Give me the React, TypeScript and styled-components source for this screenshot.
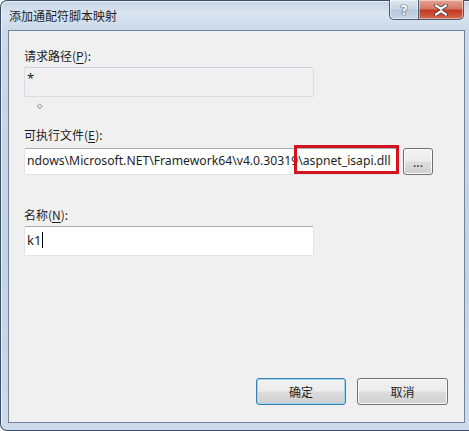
import React from "react";
import styled, { createGlobalStyle } from "styled-components";

const Global = createGlobalStyle`
  html, body { margin: 0; padding: 0; background: #ffffff; }
  body { width: 469px; height: 431px; overflow: hidden; font-family: "Noto Sans", "Noto Sans CJK SC", sans-serif; }
`;

const Window = styled.div`
  box-sizing: border-box;
  width: 469px;
  height: 431px;
  display: flex;
  flex-direction: column;
  border: 1px solid #3d4f66;
  border-right: none;
  border-radius: 7px 0 0 7px;
  background: linear-gradient(180deg, #c4d4e6 0px, #d9e4f0 12px, #cbd9e8 30px, #c2d3e6 60%, #cddbea 100%);
  box-shadow: inset 1px 1px 0 #eaf1f8;
`;

const TitleBar = styled.div`
  height: 29px;
  display: flex;
  align-items: flex-start;
  justify-content: space-between;
  flex-shrink: 0;
`;

const Title = styled.div`
  padding: 6px 0 0 8px;
  font-family: "Noto Sans CJK SC", sans-serif;
  font-size: 12px;
  line-height: 18px;
  color: #1e1e1e;
`;

const Caption = styled.div`
  display: flex;
  margin-right: 5px;
  margin-top: -1px;
`;

const CapBtn = styled.div<{ $close?: boolean }>`
  box-sizing: border-box;
  width: ${(p) => (p.$close ? 46 : 29)}px;
  height: 20px;
  display: flex;
  align-items: center;
  justify-content: center;
  border: 1px solid #4d5b6e;
  border-top: none;
  ${(p) =>
    p.$close
      ? `border-radius: 0 0 5px 0;
         background: linear-gradient(180deg, #e8a493 0%, #d47866 45%, #c23b22 55%, #d3674e 100%);`
      : `border-radius: 0 0 0 5px; border-right: none;
         background: linear-gradient(180deg, #dfe7f0 0%, #cbd7e5 45%, #b7c7da 55%, #c9d6e5 100%);`}
  box-shadow: inset 0 0 0 1px rgba(255,255,255,0.45);
`;

const HelpGlyph = styled.span`
  font-family: "DejaVu Sans", sans-serif;
  font-weight: bold;
  font-size: 14px;
  line-height: 14px;
  color: #ffffff;
  text-shadow: 0 0 1px #3a4a5e, 0 0 1px #3a4a5e, 0 0 1px #3a4a5e;
`;

const Client = styled.div`
  flex: 1;
  margin: 0 4px 7px 7px;
  box-sizing: border-box;
  border: 1px solid #72849a;
  background: #f0f0f0;
  padding: 17px 0 0 15px;
  display: flex;
  flex-direction: column;
  position: relative;
`;

const Label = styled.div`
  font-family: "Noto Sans CJK SC", sans-serif;
  font-size: 12px;
  line-height: 16px;
  color: #1e1e1e;
  u { text-decoration: underline; text-underline-offset: 2px; }
`;

const Gap = styled.div<{ $h: number }>`
  height: ${(p) => p.$h}px;
  flex-shrink: 0;
`;

const FieldBox = styled.div<{ $disabled?: boolean; $w: number; $h: number }>`
  box-sizing: border-box;
  width: ${(p) => p.$w}px;
  height: ${(p) => p.$h}px;
  flex-shrink: 0;
  border: 1px solid ${(p) => (p.$disabled ? "#d9dde2" : "#e2e3ea")};
  border-top-color: ${(p) => (p.$disabled ? "#cfd3d8" : "#abadb3")};
  background: ${(p) => (p.$disabled ? "#f0f0f0" : "#ffffff")};
  border-radius: 2px;
  overflow: hidden;
  font-family: "Noto Sans", "Noto Sans CJK SC", sans-serif;
  font-size: 13px;
  color: #1e1e1e;
  display: flex;
`;

const FieldText = styled.div<{ $pt: number; $size?: number }>`
  padding: ${(p) => p.$pt}px 0 0 2px;
  line-height: 16px;
  height: 16px;
  white-space: nowrap;
  display: flex;
  align-items: center;
  ${(p) => (p.$size ? `font-size: ${p.$size}px;` : "")}
`;

const Caret = styled.span`
  display: inline-block;
  width: 1px;
  height: 16px;
  background: #000;
  margin-left: 1px;
`;

const Dot = styled.div`
  font-family: "DejaVu Sans", sans-serif;
  font-size: 7px;
  line-height: 8px;
  color: #333;
  margin: 5px 0 0 13px;
`;

const Row = styled.div`
  display: flex;
  align-items: flex-start;
  gap: 4px;
  position: relative;
`;

const Highlight = styled.div`
  position: absolute;
  left: 270px;
  top: -3px;
  width: 105px;
  height: 29px;
  box-sizing: border-box;
  border: 3px solid #d3131d;
`;

const Button = styled.div<{ $w: number; $h: number; $def?: boolean }>`
  box-sizing: border-box;
  width: ${(p) => p.$w}px;
  height: ${(p) => p.$h}px;
  flex-shrink: 0;
  border: 1px solid ${(p) => (p.$def ? "#3c7fb1" : "#707070")};
  border-radius: 3px;
  background: linear-gradient(180deg, #f2f2f2 0%, #ebebeb 48%, #dddddd 52%, #cfcfcf 100%);
  box-shadow: inset 0 0 0 1px ${(p) => (p.$def ? "#9ad6f0" : "#fbfbfb")};
  display: flex;
  align-items: center;
  justify-content: center;
  font-family: "Noto Sans CJK SC", sans-serif;
  font-size: 12px;
  color: #1e1e1e;
  padding-bottom: 1px;
`;

const Footer = styled.div`
  margin-top: auto;
  margin-bottom: 17px;
  margin-right: 16px;
  display: flex;
  justify-content: flex-end;
  gap: 11px;
`;

export default function App() {
  return (
    <>
      <Global />
      <Window>
        <TitleBar>
          <Title>添加通配符脚本映射</Title>
          <Caption>
            <CapBtn>
              <HelpGlyph>?</HelpGlyph>
            </CapBtn>
            <CapBtn $close>
              <svg width="16" height="12" viewBox="0 0 16 12">
                <path
                  d="M3 1.5 L8 5 L13 1.5 M3 10.5 L8 7 L13 10.5"
                  fill="none"
                  stroke="#3a2a2a"
                  strokeWidth="3.6"
                  strokeLinecap="round"
                />
                <path
                  d="M3 1.5 L8 5 L13 1.5 M3 10.5 L8 7 L13 10.5"
                  fill="none"
                  stroke="#ffffff"
                  strokeWidth="2.2"
                  strokeLinecap="round"
                />
              </svg>
            </CapBtn>
          </Caption>
        </TitleBar>
        <Client>
          <Label>
            请求路径(<u>P</u>):
          </Label>
          <Gap $h={3} />
          <FieldBox $disabled $w={290} $h={30}>
            <FieldText $pt={2}>*</FieldText>
          </FieldBox>
          <Dot>◇</Dot>
          <Gap $h={17} />
          <Label>
            可执行文件(<u>E</u>):
          </Label>
          <Gap $h={5} />
          <Row>
            <FieldBox $w={375} $h={27}>
              <FieldText $pt={4} $size={12.2}>ndows\Microsoft.NET\Framework64\v4.0.30319\aspnet_isapi.dll</FieldText>
            </FieldBox>
            <Button $w={30} $h={27}>...</Button>
            <Highlight />
          </Row>
          <Gap $h={32} />
          <Label>
            名称(<u>N</u>):
          </Label>
          <Gap $h={3} />
          <FieldBox $w={290} $h={30}>
            <FieldText $pt={5}>
              k1
              <Caret />
            </FieldText>
          </FieldBox>
          <Footer>
            <Button $def $w={90} $h={27}>确定</Button>
            <Button $w={91} $h={27}>取消</Button>
          </Footer>
        </Client>
      </Window>
    </>
  );
}
